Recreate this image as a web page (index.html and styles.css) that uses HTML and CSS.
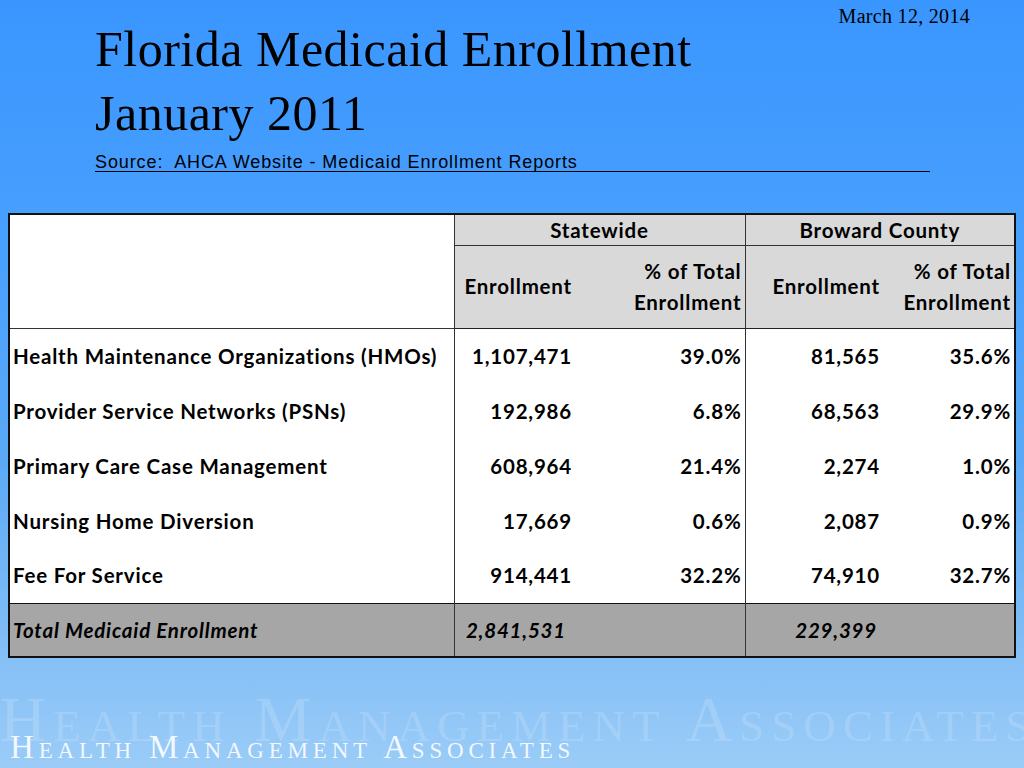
FILE: index.html
```html
<!DOCTYPE html>
<html>
<head>
<meta charset="utf-8">
<link rel="stylesheet" href="styles.css">
</head>
<body>
<div class="slide">
  <header class="head">
    <div class="date">March 12, 2014</div>
    <h1 class="title">Florida Medicaid Enrollment<br>January 2011</h1>
    <div class="source">Source:&nbsp; AHCA Website - Medicaid Enrollment Reports</div>
  </header>

  <table class="data">
    <colgroup>
      <col class="c-label"><col class="c-enr"><col class="c-pct"><col class="c-enr2"><col class="c-pct2">
    </colgroup>
    <thead>
      <tr class="h1">
        <th class="blank" rowspan="2"></th>
        <th class="grp" colspan="2">Statewide</th>
        <th class="grp" colspan="2">Broward County</th>
      </tr>
      <tr class="h2">
        <th class="sub">Enrollment</th>
        <th class="sub pct">% of Total<br>Enrollment</th>
        <th class="sub sep">Enrollment</th>
        <th class="sub pct">% of Total<br>Enrollment</th>
      </tr>
    </thead>
    <tbody>
      <tr><td class="lbl">Health Maintenance Organizations (HMOs)</td><td>1,107,471</td><td class="pct">39.0%</td><td class="sep">81,565</td><td class="pct">35.6%</td></tr>
      <tr><td class="lbl">Provider Service Networks (PSNs)</td><td>192,986</td><td class="pct">6.8%</td><td class="sep">68,563</td><td class="pct">29.9%</td></tr>
      <tr><td class="lbl">Primary Care Case Management</td><td>608,964</td><td class="pct">21.4%</td><td class="sep">2,274</td><td class="pct">1.0%</td></tr>
      <tr><td class="lbl">Nursing Home Diversion</td><td>17,669</td><td class="pct">0.6%</td><td class="sep">2,087</td><td class="pct">0.9%</td></tr>
      <tr><td class="lbl">Fee For Service</td><td>914,441</td><td class="pct">32.2%</td><td class="sep">74,910</td><td class="pct">32.7%</td></tr>
    </tbody>
    <tfoot>
      <tr class="total"><td class="lbl">Total Medicaid Enrollment</td><td class="t1">2,841,531</td><td></td><td class="sep t2">229,399</td><td></td></tr>
    </tfoot>
  </table>

  <footer class="brand">
    <div class="brand-big">Health Management Associates</div>
    <div class="brand-small">Health Management Associates</div>
  </footer>
</div>
</body>
</html>
```

FILE: styles.css
```css
html, body {
  margin: 0;
  padding: 0;
}
body {
  width: 1024px;
  height: 768px;
  overflow: hidden;
  background: linear-gradient(to bottom, #3a96ff 0%, #4aa1fd 35%, #5ba9f6 60%, #84bff6 85%, #9bccf7 100%);
}
.slide {
  width: 1024px;
  height: 768px;
  display: flex;
  flex-direction: column;
}
.head {
  padding-top: 8px;
}
.date {
  font-family: "Liberation Serif", serif;
  font-size: 20px;
  line-height: 16px;
  text-align: right;
  padding-right: 54px;
  letter-spacing: 0.3px;
  color: #000;
}
.title {
  margin: -7px 0 0 0;
  padding-left: 95px;
  font-family: "Liberation Serif", serif;
  font-weight: normal;
  font-size: 50px;
  line-height: 64px;
  letter-spacing: 0.5px;
  color: #000;
}
.source {
  margin: 8px 0 0 95px;
  width: 835px;
  font-family: "Liberation Sans", sans-serif;
  font-size: 18px;
  line-height: 18px;
  letter-spacing: 0.9px;
  border-bottom: 1px solid #000;
  color: #000;
}
.data {
  margin: 41px 0 0 8px;
  width: 1006px;
  border-collapse: collapse;
  table-layout: fixed;
  border: 2px solid #111;
  font-family: Lato, "Open Sans", sans-serif;
  font-weight: bold;
  font-size: 20.5px;
  letter-spacing: 0.8px;
  color: #000;
}
.c-label { width: 445px; }
.c-enr { width: 121px; }
.c-pct { width: 170px; }
.c-enr2 { width: 138px; }
.c-pct2 { width: 132px; }

.data th, .data td {
  padding: 0 3px;
  text-align: right;
  vertical-align: middle;
}
.data th {
  background: #d9d9d9;
  font-weight: bold;
}
.data th.blank {
  background: #fff;
  border-right: 1px solid #333;
  border-bottom: 1px solid #333;
}
.h1 { height: 31px; }
.h1 .grp {
  text-align: center;
  border-bottom: 1px solid #333;
  border-right: 1px solid #333;
}
.h2 { height: 83px; }
.h2 th {
  border-bottom: 1px solid #222;
  line-height: 31px;
}
.data .sep { border-left: 1px solid #333; }
.data tbody tr { height: 55px; }
.data tbody td {
  background: #fff;
}
.data td.lbl {
  text-align: left;
  border-right: 1px solid #333;
}
.total { height: 54px; }
.total td {
  background: #a6a6a6;
  font-style: italic;
  border-top: 1px solid #111;
}
.total .t1 { padding-right: 9px; }
.total .t2 { padding-right: 6px; }

.brand {
  position: relative;
  margin-top: auto;
  height: 100px;
}
.brand-big {
  font-family: "Liberation Serif", serif;
  font-variant: small-caps;
  font-size: 64px;
  line-height: 64px;
  color: rgba(255, 255, 255, 0.16);
  white-space: nowrap;
  padding: 20px 0 0 0;
  letter-spacing: 7px;
}
.brand-small {
  position: absolute;
  left: 10px;
  top: 63px;
  font-family: "Liberation Serif", serif;
  font-variant: small-caps;
  font-size: 33px;
  line-height: 32px;
  color: rgba(255, 255, 255, 0.88);
  white-space: nowrap;
  letter-spacing: 4.8px;
}
```
